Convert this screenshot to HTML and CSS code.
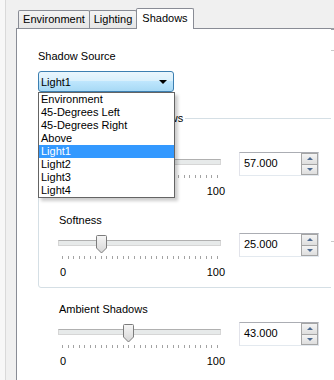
FILE: index.html
```html
<!DOCTYPE html>
<html lang="en">
<head>
  <meta charset="UTF-8">
  <meta name="viewport" content="width=device-width, initial-scale=1.0">
  <title>Shadows</title>
  <link rel="stylesheet" href="styles.css">
</head>
<body>

  <div class="window">
    <div class="sidebar"></div>

    <div class="tab-control">
      <div class="tab-strip">
        <div class="tab tab-environment">Environment</div>
        <div class="tab tab-lighting">Lighting</div>
        <div class="tab tab-active">Shadows</div>
      </div>

      <div class="tab-page">
        <!-- Source -->
        <div class="field-label">Shadow Source</div>
        <div class="combo-wrap">
          <div class="combo">
            <span>Light1</span>
            <span class="combo-arrow"></span>
          </div>
          <ul class="combo-list">
            <li>Environment</li>
            <li>45-Degrees Left</li>
            <li>45-Degrees Right</li>
            <li>Above</li>
            <li class="selected">Light1</li>
            <li>Light2</li>
            <li>Light3</li>
            <li>Light4</li>
          </ul>
        </div>

        <!-- Directional shadows -->
        <fieldset class="group">
          <legend class="group-title">Directional Shadows</legend>

          <div class="slider">
            <div class="slider-label">Intensity</div>
            <div class="slider-row">
              <div class="slider-track">
                <span class="slider-thumb" style="left: 87px">
                  <svg width="11" height="19" viewBox="0 0 11 19"><defs><linearGradient id="thumb1" x1="0" y1="0" x2="0" y2="1"><stop offset="0" stop-color="#f6f6f6"/><stop offset="1" stop-color="#d6d6d6"/></linearGradient></defs><path d="M1.5 .5h8a1 1 0 0 1 1 1v11.5l-5 5-5-5V1.5a1 1 0 0 1 1-1z" fill="url(#thumb1)" stroke="#7c7c7c"/></svg>
                </span>
              </div>
              <div class="spin">
                <span class="spin-value">57.000</span>
                <span class="spin-buttons">
                  <span class="spin-btn"><span class="arrow-up"></span></span>
                  <span class="spin-btn"><span class="arrow-down"></span></span>
                </span>
              </div>
            </div>
            <div class="slider-ticks"></div>
            <div class="slider-scale"><span>0</span><span>100</span></div>
          </div>

          <div class="slider">
            <div class="slider-label">Softness</div>
            <div class="slider-row">
              <div class="slider-track">
                <span class="slider-thumb" style="left: 38px">
                  <svg width="11" height="19" viewBox="0 0 11 19"><defs><linearGradient id="thumb2" x1="0" y1="0" x2="0" y2="1"><stop offset="0" stop-color="#f6f6f6"/><stop offset="1" stop-color="#d6d6d6"/></linearGradient></defs><path d="M1.5 .5h8a1 1 0 0 1 1 1v11.5l-5 5-5-5V1.5a1 1 0 0 1 1-1z" fill="url(#thumb2)" stroke="#7c7c7c"/></svg>
                </span>
              </div>
              <div class="spin">
                <span class="spin-value">25.000</span>
                <span class="spin-buttons">
                  <span class="spin-btn"><span class="arrow-up"></span></span>
                  <span class="spin-btn"><span class="arrow-down"></span></span>
                </span>
              </div>
            </div>
            <div class="slider-ticks"></div>
            <div class="slider-scale"><span>0</span><span>100</span></div>
          </div>
        </fieldset>

        <!-- Ambient -->
        <div class="slider slider-ambient">
          <div class="slider-label">Ambient Shadows</div>
          <div class="slider-row">
            <div class="slider-track">
              <span class="slider-thumb" style="left: 65px">
                <svg width="11" height="19" viewBox="0 0 11 19"><defs><linearGradient id="thumb3" x1="0" y1="0" x2="0" y2="1"><stop offset="0" stop-color="#f6f6f6"/><stop offset="1" stop-color="#d6d6d6"/></linearGradient></defs><path d="M1.5 .5h8a1 1 0 0 1 1 1v11.5l-5 5-5-5V1.5a1 1 0 0 1 1-1z" fill="url(#thumb3)" stroke="#7c7c7c"/></svg>
              </span>
            </div>
            <div class="spin">
              <span class="spin-value">43.000</span>
              <span class="spin-buttons">
                <span class="spin-btn"><span class="arrow-up"></span></span>
                <span class="spin-btn"><span class="arrow-down"></span></span>
              </span>
            </div>
          </div>
          <div class="slider-ticks"></div>
          <div class="slider-scale"><span>0</span><span>100</span></div>
        </div>
      </div>
    </div>

    <div class="edge"></div>
  </div>

</body>
</html>
```

FILE: styles.css
```css
/* Couleurs du thème Windows 7 */
:root {
  --tab-border: #898c95;
  --group-border: #d5dfe5;
  --window-bg: #f0f0f0;
  --highlight: #3399ff;
  --text-color: #000000;
}

* {
  box-sizing: border-box;
}

html,
body {
  margin: 0;
}

body {
  font-family: "Liberation Sans", Arial, sans-serif;
  font-size: 11px;
  color: var(--text-color);
  background-color: var(--window-bg);
}

.window {
  display: flex;
  height: 380px;
  overflow: hidden;
}

.sidebar {
  width: 16px;
  flex: none;
  background: linear-gradient(to right, #f7f7f7 0 5px, #d9d9d9 5px 6px, var(--window-bg) 6px);
}

/* bord droit : amorces des contrôles voisins */
.edge {
  flex: 1;
  background: linear-gradient(
    var(--window-bg) 0 28px,
    #9a9ca3 28px 30px,
    #ffffff 30px 50px,
    #c8c8c8 50px 51px,
    #ffffff 51px 241px,
    #c8c8c8 241px 242px,
    #ffffff 242px
  );
}

/* Onglets */
.tab-control {
  width: 315px;
  flex: none;
  display: flex;
  flex-direction: column;
}

.tab-strip {
  height: 28px;
  display: flex;
  align-items: flex-end;
  padding-left: 2px;
}

.tab {
  height: 18px;
  line-height: 17px;
  text-align: center;
  border: 1px solid var(--tab-border);
  border-bottom: none;
  border-radius: 2px 2px 0 0;
  background: linear-gradient(#f3f3f3, #e6e6e6);
}

.tab + .tab {
  margin-left: -1px;
}

.tab-environment {
  width: 72px;
}

.tab-lighting {
  width: 48px;
}

.tab-active {
  position: relative;
  width: 58px;
  height: 21px;
  line-height: 19px;
  margin-bottom: -1px;
  background: #ffffff;
}

.tab-page {
  flex: 1;
  background-color: #ffffff;
  border-top: 1px solid var(--tab-border);
  border-left: 1px solid var(--tab-border);
  padding: 21px 0 0 21px;
  overflow: hidden;
}

/* Liste déroulante */
.field-label {
  line-height: 13px;
}

.combo-wrap {
  position: relative;
  width: 136px;
  margin-top: 8px;
}

.combo {
  height: 21px;
  display: flex;
  justify-content: space-between;
  align-items: center;
  padding: 0 6px 0 2px;
  border: 1px solid #3c7fb1;
  border-radius: 3px;
  background: linear-gradient(#eaf6fd, #d9f0fc 45%, #bee6fd 50%, #a7d9f5);
}

.combo-arrow {
  width: 0;
  height: 0;
  border-left: 4px solid transparent;
  border-right: 4px solid transparent;
  border-top: 4px solid #000000;
}

.combo-list {
  position: absolute;
  top: 100%;
  left: 0;
  z-index: 2;
  width: 137px;
  margin: 0;
  padding: 0;
  list-style: none;
  background-color: #ffffff;
  border: 1px solid #646464;
  box-shadow: 3px 3px 3px rgba(0, 0, 0, 0.2);
}

.combo-list li {
  line-height: 13px;
  padding-left: 2px;
}

.combo-list .selected {
  background-color: var(--highlight);
  color: #ffffff;
}

/* Groupe */
.group {
  width: 320px;
  min-width: 0;
  margin: 20px 0 0;
  padding: 8px 0 8px 19px;
  border: 1px solid var(--group-border);
  border-radius: 3px;
}

.group-title {
  margin-left: 23px;
  padding: 0 2px;
  line-height: 13px;
}

/* Curseurs */
.slider {
  display: flex;
  flex-direction: column;
}

.slider + .slider {
  margin-top: 16px;
}

.slider-ambient {
  margin: 15px 0 0 20px;
}

.slider-label {
  line-height: 13px;
  padding-left: 1px;
}

.slider-row {
  display: flex;
  height: 18px;
  margin-top: 6px;
}

.slider-track {
  position: relative;
  width: 163px;
  margin-right: 18px;
}

.slider-track::before {
  content: "";
  position: absolute;
  left: 0;
  right: 0;
  top: 7px;
  height: 4px;
  background-color: #e7eaea;
  border: 1px solid #d6d6d6;
  border-top-color: #b0b0b0;
}

.slider-thumb {
  position: absolute;
  top: 2px;
  width: 11px;
  height: 19px;
  line-height: 0;
}

.slider-ticks {
  width: 157px;
  height: 3px;
  margin: 5px 0 0 4px;
  background: repeating-linear-gradient(to right, #a3a3a3 0 1px, transparent 1px 5.536px);
}

.slider-scale {
  width: 167px;
  display: flex;
  justify-content: space-between;
  padding-left: 2px;
  margin-top: 7px;
  line-height: 13px;
}

/* Champ numérique */
.spin {
  width: 80px;
  height: 24px;
  flex: none;
  display: flex;
  background-color: #ffffff;
  border: 1px solid;
  border-color: #abadb3 #dbdfe6 #e3e9ef #e2e3ea;
}

.spin-value {
  flex: 1;
  padding-left: 4px;
  line-height: 21px;
}

.spin-buttons {
  width: 17px;
  display: flex;
  flex-direction: column;
}

.spin-btn {
  flex: 1;
  display: flex;
  justify-content: center;
  align-items: center;
  border: 1px solid #a5a5a5;
  background: linear-gradient(#f4f4f4, #dedede);
}

.spin-btn + .spin-btn {
  margin-top: -1px;
}

.arrow-up,
.arrow-down {
  width: 0;
  height: 0;
  border-left: 3px solid transparent;
  border-right: 3px solid transparent;
}

.arrow-up {
  border-bottom: 3px solid #4d6a91;
}

.arrow-down {
  border-top: 3px solid #4d6a91;
}
```
